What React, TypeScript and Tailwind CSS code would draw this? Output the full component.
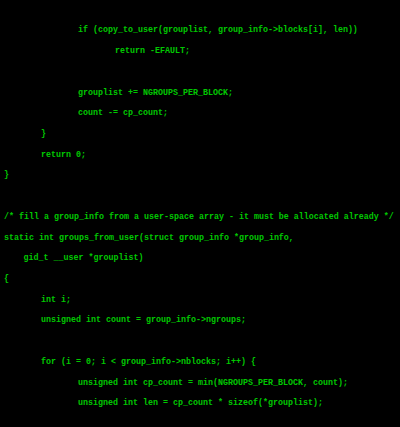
import React from "react";

type Line = { level: number; text: string };

const lines: Line[] = [
  { level: 2, text: "if (copy_to_user(grouplist, group_info->blocks[i], len))" },
  { level: 3, text: "return -EFAULT;" },
  { level: 0, text: "" },
  { level: 2, text: "grouplist += NGROUPS_PER_BLOCK;" },
  { level: 2, text: "count -= cp_count;" },
  { level: 1, text: "}" },
  { level: 1, text: "return 0;" },
  { level: 0, text: "}" },
  { level: 0, text: "" },
  { level: 0, text: "/* fill a group_info from a user-space array - it must be allocated already */" },
  { level: 0, text: "static int groups_from_user(struct group_info *group_info," },
  { level: 4, text: "gid_t __user *grouplist)" },
  { level: 0, text: "{" },
  { level: 1, text: "int i;" },
  { level: 1, text: "unsigned int count = group_info->ngroups;" },
  { level: 0, text: "" },
  { level: 1, text: "for (i = 0; i < group_info->nblocks; i++) {" },
  { level: 2, text: "unsigned int cp_count = min(NGROUPS_PER_BLOCK, count);" },
  { level: 2, text: "unsigned int len = cp_count * sizeof(*grouplist);" },
];

const indent: Record<number, string> = {
  0: "pl-0",
  1: "pl-[37px]",
  2: "pl-[74px]",
  3: "pl-[111px]",
  4: "pl-[19.5px]",
};

export default function App() {
  return (
    <div className="w-[400px] h-[427px] bg-black overflow-hidden pt-[20.4px] pl-[4px]">
      <div className="font-['Liberation_Mono',monospace] font-bold text-[8.33px] leading-[20.72px] text-[#00c800] whitespace-pre">
        {lines.map((l, i) => (
          <div key={i} className={`${indent[l.level]} h-[20.72px]`}>
            {l.text}
          </div>
        ))}
      </div>
    </div>
  );
}
